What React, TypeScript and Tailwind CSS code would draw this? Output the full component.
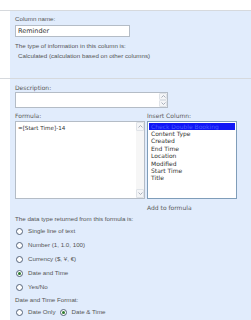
import React from 'react';

const label = "font-['Liberation_Sans',Arial,sans-serif] text-[6.2px] leading-[8px] text-[#555]";
const vlabel = "font-['DejaVu_Sans',Verdana,sans-serif] text-[6px] leading-[8px] text-[#5a5a5a]";

const Arrow: React.FC<{ up?: boolean }> = ({ up }) => (
  <svg width="5" height="3" viewBox="0 0 5 3" className="block">
    <path d={up ? 'M0.5 2.5 L2.5 0.5 L4.5 2.5' : 'M0.5 0.5 L2.5 2.5 L4.5 0.5'} fill="none" stroke="#a0a8b4" strokeWidth="0.9" />
  </svg>
);

const ScrollBtn: React.FC<{ up?: boolean; h: number }> = ({ up, h }) => (
  <div
    className="w-[8px] flex items-center justify-center border border-[#dfe3e8] rounded-[1px] bg-[#f4f5f7]"
    style={{ height: h }}
  >
    <Arrow up={up} />
  </div>
);

const Radio: React.FC<{ text: string; checked?: boolean }> = ({ text, checked }) => (
  <div className="flex items-center gap-[5px]">
    <div className="w-[7px] h-[7px] rounded-full border border-[#55637a] bg-white flex items-center justify-center">
      {checked && <div className="w-[3px] h-[3px] rounded-full bg-[#2c7a2c]" />}
    </div>
    <span className={label}>{text}</span>
  </div>
);

const columns = ['Content Type', 'Created', 'End Time', 'Location', 'Modified', 'Start Time', 'Title'];

export default function App() {
  return (
    <div className="w-[251px] h-[320px] bg-white overflow-hidden">
      <div className="h-[10px]" />
      {/* name and type */}
      <div className="flex border-t border-[#d6d9dd] h-[68px]">
        <div className="w-[10px] bg-white" />
        <div className="flex-1 bg-[#e1ecfc] pl-[5px] pt-[4px]">
          <div className={label}>Column name:</div>
          <div className="mt-[2px] w-[115px] h-[12px] bg-white border border-[#b4bcc6] flex items-center pl-[2px]">
            <span className="font-['DejaVu_Sans',Verdana,sans-serif] text-[6.5px] leading-[8px] text-[#333]">Reminder</span>
          </div>
          <div className={`${label} mt-[5px]`}>The type of information in this column is:</div>
          <div className={`${label} mt-[2px] pl-[3px]`}>Calculated (calculation based on other columns)</div>
        </div>
      </div>
      {/* settings */}
      <div className="flex border-t border-[#d6d9dd] h-[242px]">
        <div className="w-[10px] bg-white" />
        <div className="flex-1 bg-[#e1ecfc] pl-[5px] pt-[5px]">
          <div className={vlabel}>Description:</div>
          <div className="w-[153px] h-[16px] bg-white border border-[#b4bcc6] flex justify-end">
            <div className="flex flex-col">
              <ScrollBtn up h={7} />
              <ScrollBtn h={7} />
            </div>
          </div>
          <div className="flex mt-[4px] gap-[2px]">
            <div className="flex flex-col">
              <div className={vlabel}>Formula:</div>
              <div className="mt-[1px] w-[130px] h-[78px] bg-white border border-[#b4bcc6] flex">
                <div className="flex-1 pl-[2px] pt-[2px] font-['DejaVu_Sans',Verdana,sans-serif] text-[5.6px] leading-[8px] text-[#333]">
                  =[Start Time]-14
                </div>
                <div className="flex flex-col justify-between bg-[#f6f6f6]">
                  <ScrollBtn up h={9} />
                  <ScrollBtn h={9} />
                </div>
              </div>
            </div>
            <div className="flex flex-col">
              <div className={vlabel}>Insert Column:</div>
              <div className="mt-[1px] w-[90px] h-[78px] bg-white border border-[#7f9db9] px-[1px] pt-[1px]">
                <div className="h-[7px] bg-[#1016f5] flex items-center pl-[2px] overflow-hidden">
                  <span className="font-['DejaVu_Sans',Verdana,sans-serif] text-[6px] leading-[7px] text-[#4a5cff] whitespace-nowrap">Check Double Booking</span>
                </div>
                {columns.map((c) => (
                  <div key={c} className="font-['DejaVu_Sans',Verdana,sans-serif] text-[6px] leading-[7.4px] text-[#333] pl-[2px]">
                    {c}
                  </div>
                ))}
              </div>
              <div className={`${vlabel} mt-[5px] text-[#4b5f82]`}>Add to formula</div>
            </div>
          </div>
          <div className={`${label} mt-[3px]`}>The data type returned from this formula is:</div>
          <div className="flex flex-col gap-[6px] mt-[4px] pl-[1px]">
            <Radio text="Single line of text" />
            <Radio text="Number (1, 1.0, 100)" />
            <Radio text="Currency ($, ¥, €)" />
            <Radio text="Date and Time" checked />
            <Radio text="Yes/No" />
          </div>
          <div className={`${label} mt-[5px]`}>Date and Time Format:</div>
          <div className="flex gap-[4px] mt-[4px] pl-[1px]">
            <Radio text="Date Only" />
            <Radio text="Date & Time" checked />
          </div>
        </div>
      </div>
    </div>
  );
}
